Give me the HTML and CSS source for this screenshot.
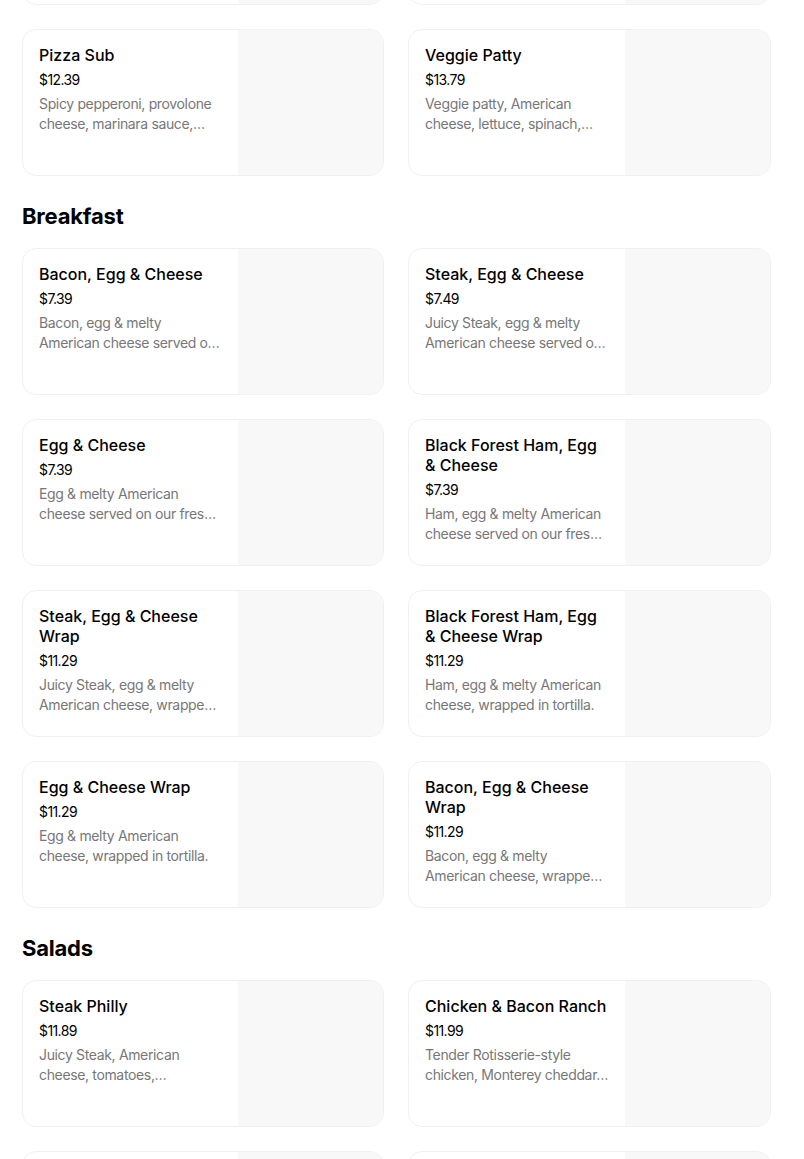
FILE: index.html
```html
<!DOCTYPE html>
<html>
<head>
<meta charset="utf-8">
<link rel="stylesheet" href="styles.css">
</head>
<body>
<main class="menu">
  <div class="grid first">
    <div class="card"><div class="info"><div class="title">Cold Cut Combo</div><div class="price">$9.99</div><div class="desc">Ham, salami &amp; bologna.</div></div><div class="pic"></div></div>
    <div class="card"><div class="info"><div class="title">Tuna</div><div class="price">$10.99</div><div class="desc">Tuna salad.</div></div><div class="pic"></div></div>
    <div class="card"><div class="info"><div class="title">Pizza Sub</div><div class="price">$12.39</div><div class="desc">Spicy pepperoni, provolone cheese, marinara sauce, served on our fresh bread.</div></div><div class="pic"></div></div>
    <div class="card"><div class="info"><div class="title">Veggie Patty</div><div class="price">$13.79</div><div class="desc">Veggie patty, American cheese, lettuce, spinach, tomatoes and more.</div></div><div class="pic"></div></div>
  </div>

  <h2 class="section">Breakfast</h2>
  <div class="grid">
    <div class="card"><div class="info"><div class="title">Bacon, Egg &amp; Cheese</div><div class="price">$7.39</div><div class="desc">Bacon, egg &amp; melty American cheese served on our fresh baked bread.</div></div><div class="pic"></div></div>
    <div class="card"><div class="info"><div class="title">Steak, Egg &amp; Cheese</div><div class="price">$7.49</div><div class="desc">Juicy Steak, egg &amp; melty American cheese served on our fresh baked bread.</div></div><div class="pic"></div></div>
    <div class="card"><div class="info"><div class="title">Egg &amp; Cheese</div><div class="price">$7.39</div><div class="desc">Egg &amp; melty American cheese served on our fresh baked bread.</div></div><div class="pic"></div></div>
    <div class="card"><div class="info"><div class="title">Black Forest Ham, Egg &amp; Cheese</div><div class="price">$7.39</div><div class="desc">Ham, egg &amp; melty American cheese served on our fresh baked bread.</div></div><div class="pic"></div></div>
    <div class="card"><div class="info"><div class="title">Steak, Egg &amp; Cheese Wrap</div><div class="price">$11.29</div><div class="desc">Juicy Steak, egg &amp; melty American cheese, wrapped in tortilla.</div></div><div class="pic"></div></div>
    <div class="card"><div class="info"><div class="title">Black Forest Ham, Egg &amp; Cheese Wrap</div><div class="price">$11.29</div><div class="desc">Ham, egg &amp; melty American cheese, wrapped in tortilla.</div></div><div class="pic"></div></div>
    <div class="card"><div class="info"><div class="title">Egg &amp; Cheese Wrap</div><div class="price">$11.29</div><div class="desc">Egg &amp; melty American cheese, wrapped in tortilla.</div></div><div class="pic"></div></div>
    <div class="card"><div class="info"><div class="title">Bacon, Egg &amp; Cheese Wrap</div><div class="price">$11.29</div><div class="desc">Bacon, egg &amp; melty American cheese, wrapped in tortilla.</div></div><div class="pic"></div></div>
  </div>

  <h2 class="section">Salads</h2>
  <div class="grid">
    <div class="card"><div class="info"><div class="title">Steak Philly</div><div class="price">$11.89</div><div class="desc">Juicy Steak, American cheese, tomatoes, cucumbers, lettuce and more.</div></div><div class="pic"></div></div>
    <div class="card"><div class="info"><div class="title">Chicken &amp; Bacon Ranch</div><div class="price">$11.99</div><div class="desc">Tender Rotisserie-style chicken, Monterey cheddar, bacon and ranch.</div></div><div class="pic"></div></div>
    <div class="card"><div class="info"><div class="title">Oven Roasted Turkey</div><div class="price">$10.99</div><div class="desc">Turkey, lettuce and tomatoes.</div></div><div class="pic"></div></div>
    <div class="card"><div class="info"><div class="title">Sweet Onion Teriyaki</div><div class="price">$11.49</div><div class="desc">Teriyaki chicken with sweet onion sauce.</div></div><div class="pic"></div></div>
  </div>
</main>
</body>
</html>
```

FILE: styles.css
```css
html, body {
  margin: 0;
  padding: 0;
  background: #ffffff;
}

body {
  font-family: Inter, "Noto Sans", "Liberation Sans", sans-serif;
  color: #000000;
  overflow: hidden;
}

.menu {
  width: 749px;
  margin: -142px 0 0 22px;
}

.grid {
  display: grid;
  grid-template-columns: 362px 363px;
  gap: 24px;
}

.section {
  margin: 24px 0 16px;
  font-size: 22px;
  line-height: 32px;
  font-weight: 700;
  letter-spacing: -0.2px;
}

.card {
  display: flex;
  height: 147px;
  box-sizing: border-box;
  border: 1px solid #f0f0f0;
  border-radius: 14px;
  overflow: hidden;
  background: #ffffff;
}

.info {
  flex: 1;
  min-width: 0;
  padding: 15px 16px 0 16px;
}

.title {
  font-size: 16px;
  line-height: 20px;
  font-weight: 500;
  color: #000000;
}

.price {
  margin-top: 5px;
  font-size: 14px;
  line-height: 20px;
  letter-spacing: -0.6px;
  color: #000000;
}

.desc {
  margin-top: 4px;
  font-size: 14px;
  line-height: 20px;
  letter-spacing: -0.35px;
  color: #777777;
  display: -webkit-box;
  -webkit-line-clamp: 2;
  -webkit-box-orient: vertical;
  overflow: hidden;
}

.pic {
  width: 145px;
  flex: none;
  background: #f8f8f8;
}
```
